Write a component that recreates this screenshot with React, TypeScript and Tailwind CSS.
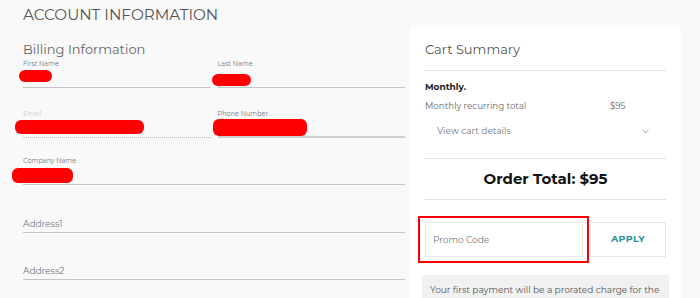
import React from "react";
import { ChevronDown } from "lucide-react";

const font = { fontFamily: "Montserrat, 'Open Sans', 'Liberation Sans', sans-serif" };

function Redact({ className }: { className: string }) {
  return <div className={`absolute bg-[#ff0000] rounded-[6px] ${className}`} />;
}

function Field({
  label,
  labelClass = "text-[#777]",
  line = "border-b border-[#c4c4c4]",
  redact,
}: {
  label: string;
  labelClass?: string;
  line?: string;
  redact?: string;
}) {
  return (
    <div className={`relative h-[28px] ${line}`}>
      <div className={`text-[6.5px] leading-[9px] ${labelClass}`}>{label}</div>
      {redact && <Redact className={redact} />}
    </div>
  );
}

export default function App() {
  return (
    <div className="h-screen bg-[#f9f9f9] px-[23px] overflow-hidden" style={font}>
      <h1 className="pt-[4px] text-[15.25px] leading-[22px] text-[#555]">ACCOUNT INFORMATION</h1>
      <div className="flex gap-[5px] mt-[1px]">
        <div className="w-[382px] shrink-0">
          <h2 className="mt-[12px] mb-[1px] text-[13px] leading-[20px] text-[#666]">Billing Information</h2>
          <div className="grid grid-cols-2 gap-x-[7px]">
            <Field label="First Name" redact="left-[-4px] top-[10px] w-[33px] h-[12px]" />
            <Field label="Last Name" redact="left-[-6px] top-[14px] w-[39px] h-[12px]" />
          </div>
          <div className="grid grid-cols-2 gap-x-[7px] mt-[22px]">
            <Field
              label="Email"
              labelClass="text-[#c8c8c8]"
              line="border-b border-dotted border-[#bdbdbd]"
              redact="left-[-8px] top-[10px] w-[129px] h-[14px]"
            />
            <Field
              label="Phone Number"
              line="border-b-2 border-[#d0d0d0]"
              redact="left-[-5px] top-[9px] w-[94px] h-[17px]"
            />
          </div>
          <div className="mt-[19px]">
            <Field label="Company Name" redact="left-[-11px] top-[11px] w-[61px] h-[15px]" />
          </div>
          <div className="mt-[20px] h-[28px] border-b border-[#c4c4c4] flex items-end pb-[2px] text-[9px] text-[#777]">
            Address1
          </div>
          <div className="mt-[19px] h-[28px] border-b border-[#c4c4c4] flex items-end pb-[2px] text-[9px] text-[#777]">
            Address2
          </div>
        </div>

        <div className="w-[271px] shrink-0 bg-white px-[15px] h-[280px] overflow-hidden">
          <div className="pt-[12px] pb-[11px] border-b border-[#e2e2e2] text-[13px] leading-[20px] text-[#555]">
            Cart Summary
          </div>
          <div className="mt-[10px] text-[9px] leading-[12px] font-bold text-[#222]">Monthly.</div>
          <div className="mt-[7px] flex text-[8.75px] leading-[12px] text-[#666]">
            <span className="w-[185px]">Monthly recurring total</span>
            <span>$95</span>
          </div>
          <div className="mt-[13px] pl-[12px] pr-[15px] flex items-center justify-between text-[9px] leading-[12px] text-[#777]">
            <span>View cart details</span>
            <ChevronDown size={11} strokeWidth={1.5} className="text-[#666]" />
          </div>
          <div className="mt-[21px] border-b border-[#e2e2e2]" />
          <div className="h-[40px] flex items-center justify-center text-[15px] font-bold text-[#111]">
            Order Total: $95
          </div>
          <div className="border-b border-[#e2e2e2]" />
          <div className="mt-[16px] flex items-start">
            <div className="ml-[-7px] w-[171px] h-[47px] border-2 border-[#ff0000] p-[4px]">
              <div className="h-[35px] ml-[1px] border border-[#e6e6e6] flex items-center pl-[7px] text-[9px] text-[#777]">
                Promo Code
              </div>
            </div>
            <div className="mt-[6px] ml-[1px] w-[76px] h-[35px] border border-[#e6e6e6] flex items-center justify-center text-[9.5px] font-bold text-[#2a9595] tracking-[0.3px]">
              APPLY
            </div>
          </div>
          <div className="mt-[12px] -mx-[3px] bg-[#f1f1f1] h-[40px] px-[8px] pt-[9px] text-[9px] leading-[12px] text-[#555] whitespace-nowrap">
            Your first payment will be a prorated charge for the
          </div>
        </div>
      </div>
    </div>
  );
}
